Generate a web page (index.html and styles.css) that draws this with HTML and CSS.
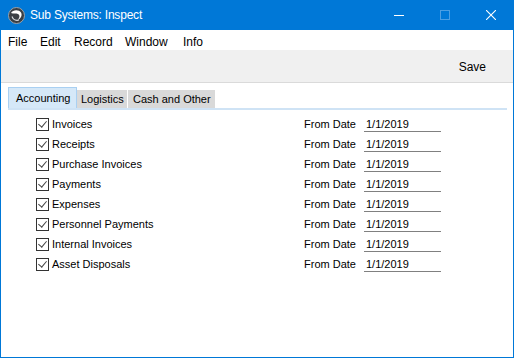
FILE: index.html
```html
<!DOCTYPE html>
<html lang="en">
<head>
    <meta charset="UTF-8">
    <title>Sub Systems: Inspect</title>
    <link rel="stylesheet" href="styles.css">
</head>
<body>
    <div class="window">
        <div class="titlebar">
            <svg class="app-icon" width="17" height="17" viewBox="0 0 17 17">
                <circle cx="8.5" cy="8.5" r="8" fill="#3a3f45"/>
                <circle cx="8.5" cy="8.5" r="8" fill="none" stroke="#9aa3ab" stroke-width="1"/>
                <path d="M3 6 C5 2.5 11 2.5 13 5.5 C14.5 8 13 12 9.5 13 C12 11 12 8 10 7 C8 6 5.5 7 3 6 Z" fill="#fff"/>
                <path d="M4 9.5 C5 12.5 8 14 11 13" fill="none" stroke="#d8dde2" stroke-width="1.2"/>
            </svg>
            <span class="title">Sub Systems: Inspect</span>
            <div class="controls">
                <span class="ctl"><svg width="10" height="10" viewBox="0 0 10 10"><path d="M0 5.5 H10" stroke="#fff" stroke-width="1"/></svg></span>
                <span class="ctl"><svg width="10" height="10" viewBox="0 0 10 10"><rect x="0.5" y="0.5" width="9" height="9" fill="none" stroke="#4d9fe3" stroke-width="1"/></svg></span>
                <span class="ctl"><svg width="10" height="10" viewBox="0 0 10 10"><path d="M0 0 L10 10 M10 0 L0 10" stroke="#fff" stroke-width="1.1"/></svg></span>
            </div>
        </div>
        <div class="menubar">
            <span>File</span>
            <span>Edit</span>
            <span>Record</span>
            <span>Window</span>
            <span>Info</span>
        </div>
        <div class="toolbar">
            <span class="save">Save</span>
        </div>
        <div class="content">
            <div class="tabs">
                <span class="tab active">Accounting</span>
                <span class="tab">Logistics</span>
                <span class="tab">Cash and Other</span>
            </div>
            <div class="rows">
                <div class="row"><span class="check"></span><span class="label">Invoices</span><span class="from">From Date</span><span class="date">1/1/2019</span></div>
                <div class="row"><span class="check"></span><span class="label">Receipts</span><span class="from">From Date</span><span class="date">1/1/2019</span></div>
                <div class="row"><span class="check"></span><span class="label">Purchase Invoices</span><span class="from">From Date</span><span class="date">1/1/2019</span></div>
                <div class="row"><span class="check"></span><span class="label">Payments</span><span class="from">From Date</span><span class="date">1/1/2019</span></div>
                <div class="row"><span class="check"></span><span class="label">Expenses</span><span class="from">From Date</span><span class="date">1/1/2019</span></div>
                <div class="row"><span class="check"></span><span class="label">Personnel Payments</span><span class="from">From Date</span><span class="date">1/1/2019</span></div>
                <div class="row"><span class="check"></span><span class="label">Internal Invoices</span><span class="from">From Date</span><span class="date">1/1/2019</span></div>
                <div class="row"><span class="check"></span><span class="label">Asset Disposals</span><span class="from">From Date</span><span class="date">1/1/2019</span></div>
            </div>
        </div>
    </div>
</body>
</html>
```

FILE: styles.css
```css
* {
    margin: 0;
    padding: 0;
    box-sizing: border-box;
}
body {
    width: 514px;
    height: 358px;
    font: 11px 'Liberation Sans', Arial, sans-serif;
    color: #000;
    background: #fff;
    overflow: hidden;
}
.window {
    width: 514px;
    height: 358px;
    display: flex;
    flex-direction: column;
    border: 1px solid #0078d7;
    border-top: 0;
}
/* title bar */
.titlebar {
    height: 30px;
    margin: 0 -1px;
    background: #0078d7;
    color: #fff;
    display: flex;
    align-items: center;
    padding-left: 8px;
}
.app-icon {
    display: block;
    margin-right: 5px;
}
.title {
    font-size: 12px;
    letter-spacing: -0.2px;
}
.controls {
    margin-left: auto;
    display: flex;
}
.ctl {
    width: 46px;
    height: 30px;
    display: flex;
    align-items: center;
    justify-content: center;
}
.ctl svg {
    display: block;
}
/* menu */
.menubar {
    height: 20px;
    display: flex;
    align-items: center;
    padding: 3px 0 0 7px;
    font-size: 12px;
}
.menubar span:nth-child(1) { width: 32px; }
.menubar span:nth-child(2) { width: 34px; }
.menubar span:nth-child(3) { width: 51px; }
.menubar span:nth-child(4) { width: 58px; }
/* toolbar */
.toolbar {
    height: 33px;
    background: #f0f0f0;
    border-bottom: 1px solid #dadada;
    display: flex;
    align-items: center;
    justify-content: flex-end;
    padding: 2px 27px 0 0;
}
.save {
    font-size: 12px;
}
/* content */
.content {
    flex: 1;
    padding: 5px 6px 0 7px;
}
.tabs {
    display: flex;
    align-items: flex-end;
    height: 22px;
    border-bottom: 2px solid #cfe3f5;
}
.tab {
    height: 18px;
    line-height: 19px;
    padding: 0 4px;
    background: #d9d9d9;
    border-right: 1px solid #fff;
    white-space: nowrap;
}
.tab:nth-child(2) { width: 51px; }
.tab:nth-child(3) { width: 88px; padding-left: 5px; }
.tab.active {
    width: 69px;
    height: 21px;
    line-height: 20px;
    background: #d5e8f8;
    border: 1px solid #a9d0f2;
    border-bottom: 0;
    padding: 0 7px;
}
.rows {
    padding: 4px 0 0 28px;
    display: flex;
    flex-direction: column;
}
.row {
    height: 20px;
    display: flex;
    align-items: center;
}
.check {
    width: 13px;
    height: 13px;
    border: 1px solid #333;
    background: #fff;
    margin-right: 3px;
    position: relative;
}
.check::after {
    content: '';
    position: absolute;
    left: 3px;
    top: 0;
    width: 4px;
    height: 7px;
    border: solid #444;
    border-width: 0 1px 1px 0;
    transform: rotate(40deg);
}
.label {
    width: 252px;
}
.from {
    width: 60px;
}
.date {
    width: 77px;
    height: 15px;
    padding-left: 2px;
    border-bottom: 1px solid #808080;
    line-height: 14px;
}
```
